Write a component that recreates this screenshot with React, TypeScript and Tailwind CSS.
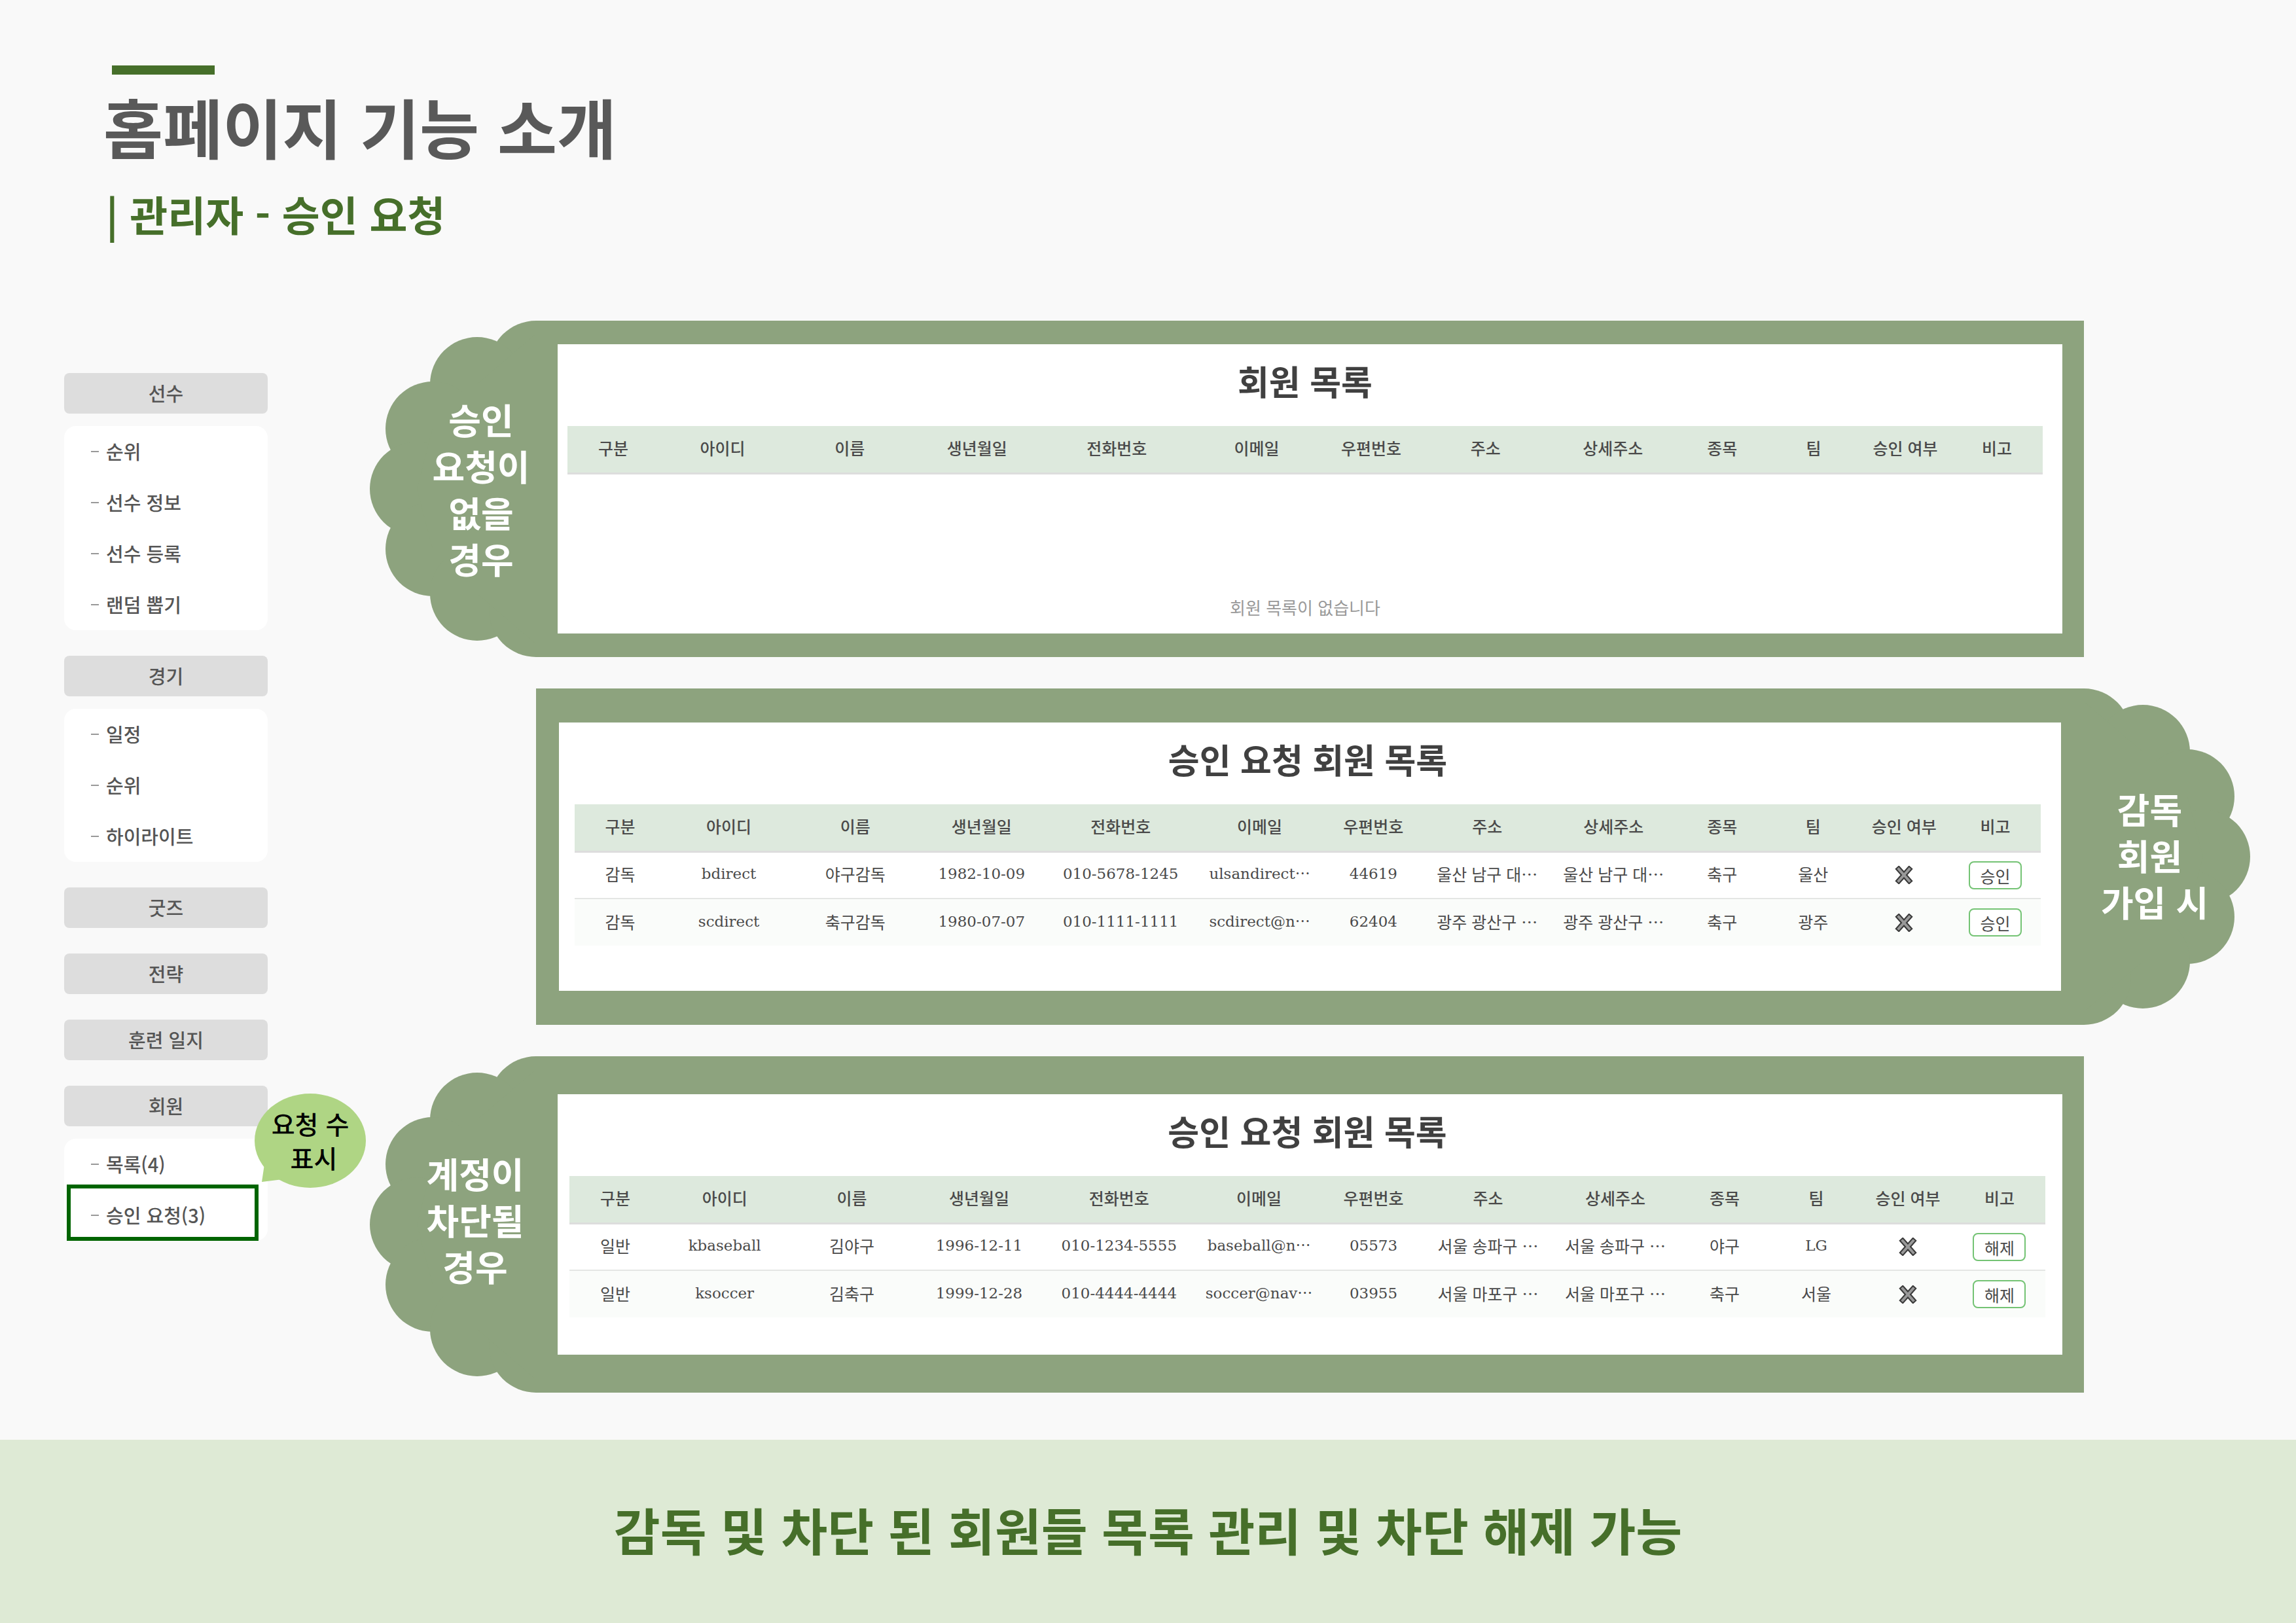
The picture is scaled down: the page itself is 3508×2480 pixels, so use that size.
import React from "react";

type Cell = string;
interface MemberRow {
  cells: Cell[];
  action: string;
}

const COLUMNS = [
  { label: "구분", width: "w-[90px]" },
  { label: "아이디", width: "w-[125px]" },
  { label: "이름", width: "w-[125px]" },
  { label: "생년월일", width: "w-[125px]" },
  { label: "전화번호", width: "w-[150px]" },
  { label: "이메일", width: "w-[125px]" },
  { label: "우편번호", width: "w-[100px]" },
  { label: "주소", width: "w-[125px]" },
  { label: "상세주소", width: "w-[125px]" },
  { label: "종목", width: "w-[90px]" },
  { label: "팀", width: "w-[90px]" },
  { label: "승인 여부", width: "w-[90px]" },
  { label: "비고", width: "w-[90px]" },
];

const COACHES: MemberRow[] = [
  {
    cells: ["감독", "bdirect", "야구감독", "1982-10-09", "010-5678-1245", "ulsandirect⋯", "44619", "울산 남구 대⋯", "울산 남구 대⋯", "축구", "울산"],
    action: "승인",
  },
  {
    cells: ["감독", "scdirect", "축구감독", "1980-07-07", "010-1111-1111", "scdirect@n⋯", "62404", "광주 광산구 ⋯", "광주 광산구 ⋯", "축구", "광주"],
    action: "승인",
  },
];

const BLOCKED: MemberRow[] = [
  {
    cells: ["일반", "kbaseball", "김야구", "1996-12-11", "010-1234-5555", "baseball@n⋯", "05573", "서울 송파구 ⋯", "서울 송파구 ⋯", "야구", "LG"],
    action: "해제",
  },
  {
    cells: ["일반", "ksoccer", "김축구", "1999-12-28", "010-4444-4444", "soccer@nav⋯", "03955", "서울 마포구 ⋯", "서울 마포구 ⋯", "축구", "서울"],
    action: "해제",
  },
];

const MENU = [
  { title: "선수", items: ["순위", "선수 정보", "선수 등록", "랜덤 뽑기"] },
  { title: "경기", items: ["일정", "순위", "하이라이트"] },
  { title: "굿즈", items: [] },
  { title: "전략", items: [] },
  { title: "훈련 일지", items: [] },
  { title: "회원", items: ["목록(4)", "승인 요청(3)"], note: true },
];

const isLatin = (text: string) => /^[\x20-\x7e⋯]+$/.test(text);

function CrossMark() {
  return (
    <svg role="img" aria-label="미승인" viewBox="0 0 28 28" className="mx-auto block size-7">
      <path d="M6 5 22 23M22 5 6 23" stroke="#3a3a3a" strokeWidth="8" strokeLinecap="square" />
      <path d="M6 5 22 23M22 5 6 23" stroke="#999" strokeWidth="4" strokeLinecap="square" />
    </svg>
  );
}

function MemberTable({ rows }: { rows: MemberRow[] }) {
  return (
    <table className="w-full table-fixed border-collapse text-center text-[25px] leading-[36px] text-[#4a4a4a]">
      <colgroup>
        {COLUMNS.map((c) => (
          <col key={c.label} className={c.width} />
        ))}
      </colgroup>
      <thead>
        <tr className="h-[72px] border-b-3 border-[#dddddd] bg-[#dde9dd]">
          {COLUMNS.map((c) => (
            <th key={c.label} scope="col" className="whitespace-nowrap p-0 pb-1 font-medium">
              {c.label}
            </th>
          ))}
        </tr>
      </thead>
      <tbody>
        {rows.map((row) => (
          <tr key={row.cells[1]} className="h-[72px] border-b-2 border-[#e4e6e4] last:border-b-0 even:bg-[#fafcfa]">
            {row.cells.map((cell, i) => (
              <td key={i} className={isLatin(cell) ? "whitespace-nowrap p-0 pb-1 font-['DejaVu_Serif','Noto_Sans_CJK_KR',serif] text-[23px]" : "whitespace-nowrap p-0 pb-1"}>
                {cell}
              </td>
            ))}
            <td className="p-0">
              <CrossMark />
            </td>
            <td className="p-0">
              <button type="button" className="h-[43px] w-[81px] rounded-lg border-2 border-[#74c374] bg-white align-middle">
                {row.action}
              </button>
            </td>
          </tr>
        ))}
      </tbody>
    </table>
  );
}

function Cloud({ lines, flip, className }: { lines: string[]; flip?: boolean; className: string }) {
  return (
    <div className="grid w-[254px] shrink-0 items-center">
      <svg aria-hidden="true" viewBox="0 0 254 514" preserveAspectRatio="none" className={flip ? "col-start-1 row-start-1 h-full w-full -scale-x-100" : "col-start-1 row-start-1 h-full w-full"} fill="#8da37e">
        <circle cx="254" cy="72" r="72" />
        <circle cx="164" cy="97" r="72" />
        <circle cx="96" cy="165" r="72" />
        <circle cx="72" cy="257" r="72" />
        <circle cx="96" cy="349" r="72" />
        <circle cx="164" cy="417" r="72" />
        <circle cx="254" cy="442" r="72" />
        <path d="M254 20 164 97 96 165 72 257 96 349 164 417 254 494Z" />
      </svg>
      <p className={`z-10 col-start-1 row-start-1 text-center text-[54px] leading-[71px] font-bold text-white ${className}`}>
        {lines.map((line) => (
          <span key={line} className="block whitespace-pre">
            {line}
          </span>
        ))}
      </p>
    </div>
  );
}

function Card({ title, children }: { title: string; children: React.ReactNode }) {
  return (
    <>
      <h3 className="pt-[18px] pb-[31px] text-center text-[52px] leading-[76px] font-bold text-[#404040]">{title}</h3>
      {children}
    </>
  );
}

function RequestNote() {
  return (
    <div className="absolute top-3 left-[291px] h-[144px] w-[170px]">
      <svg aria-hidden="true" viewBox="0 0 170 144" className="h-full w-full" fill="#afd584">
        <ellipse cx="85" cy="72" rx="85" ry="72" />
        <path d="M15 108 11 135 43 131Z" />
      </svg>
      <p className="absolute inset-0 pt-[19px] text-center text-[39px] leading-[52px] font-medium text-black">
        <span className="block">요청 수</span>
        <span className="block">&nbsp;표시</span>
      </p>
    </div>
  );
}

function SideMenu() {
  return (
    <nav aria-label="관리자 메뉴" className="mt-[80px] w-[311px] shrink-0 text-[29px] text-[#555555]">
      {MENU.map((group) => (
        <section key={group.title} className="relative mb-[39px]">
          <button type="button" className="block h-[62px] w-full rounded-lg bg-[#dddddd] text-center font-medium">
            {group.title}
          </button>
          {group.items.length > 0 && (
            <ul className="mt-[19px] rounded-[18px] bg-white">
              {group.items.map((item) => (
                <li key={item} className="relative">
                  <a href="#" className="flex h-[78px] items-center gap-[11px] pl-[41px] font-medium">
                    <span aria-hidden="true" className="h-[2px] w-3 bg-[#999999]" />
                    {item}
                  </a>
                  {item.startsWith("승인") && <span className="pointer-events-none absolute -top-2 right-[14px] bottom-0 left-1 border-6 border-[#006400]" />}
                </li>
              ))}
            </ul>
          )}
          {group.note && <RequestNote />}
        </section>
      ))}
    </nav>
  );
}

export default function App() {
  return (
    <div lang="ko" className="flex min-h-screen flex-col bg-[#f9f9f9] font-['Noto_Sans_CJK_KR',sans-serif]">
      <header className="pt-[100px] pl-[158px]">
        <div className="ml-[13px] h-[14px] w-[157px] bg-[#466f2a]" />
        <h1 className="mt-[10px] text-[99px] leading-[136px] font-bold text-[#595959]">홈페이지 기능 소개</h1>
        <h2 className="mt-[16px] pl-1 text-[63px] leading-[100px] font-bold text-[#466f2a]">| 관리자 - 승인 요청</h2>
      </header>

      <div className="mt-[114px] flex gap-[156px] pr-[70px] pl-[98px]">
        <SideMenu />
        <main className="flex min-w-0 flex-1 flex-col gap-12">
          <section className="mr-[254px] flex min-h-[514px]">
            <Cloud lines={["승인", "요청이", "없을", "경우"]} className="pl-[86px]" />
            <div className="flex flex-1 bg-[#8da37e] py-[36px] pr-[33px]">
              <div className="z-10 ml-[33px] flex flex-1 flex-col bg-white pr-[30px] pl-[15px]">
                <Card title="회원 목록">
                  <MemberTable rows={[]} />
                  <p className="mt-auto pb-[20px] text-center text-[26px] leading-[40px] text-[#999999]">회원 목록이 없습니다</p>
                </Card>
              </div>
            </div>
          </section>

          <section className="ml-[254px] flex min-h-[514px]">
            <div className="flex flex-1 bg-[#8da37e] py-[52px] pr-[35px] pl-[35px]">
              <div className="flex flex-1 flex-col bg-white pr-[31px] pl-[24px]">
                <Card title="승인 요청 회원 목록">
                  <MemberTable rows={COACHES} />
                </Card>
              </div>
            </div>
            <Cloud lines={["감독 ", "회원 ", "가입 시"]} flip className="pr-[38px] pb-[6px]" />
          </section>

          <section className="mr-[254px] flex min-h-[514px]">
            <Cloud lines={["계정이", "차단될", "경우"]} className="pb-[16px] pl-[68px]" />
            <div className="flex flex-1 bg-[#8da37e] py-[58px] pr-[33px]">
              <div className="z-10 ml-[33px] flex flex-1 flex-col bg-white pr-[26px] pl-[18px]">
                <Card title="승인 요청 회원 목록">
                  <MemberTable rows={BLOCKED} />
                </Card>
              </div>
            </div>
          </section>
        </main>
      </div>

      <footer className="mt-auto flex h-[280px] items-center justify-center bg-[#deead5] pb-[6px]">
        <p className="text-[77px] leading-[112px] font-bold text-[#466f2a]">감독 및 차단 된 회원들 목록 관리 및 차단 해제 가능</p>
      </footer>
    </div>
  );
}
